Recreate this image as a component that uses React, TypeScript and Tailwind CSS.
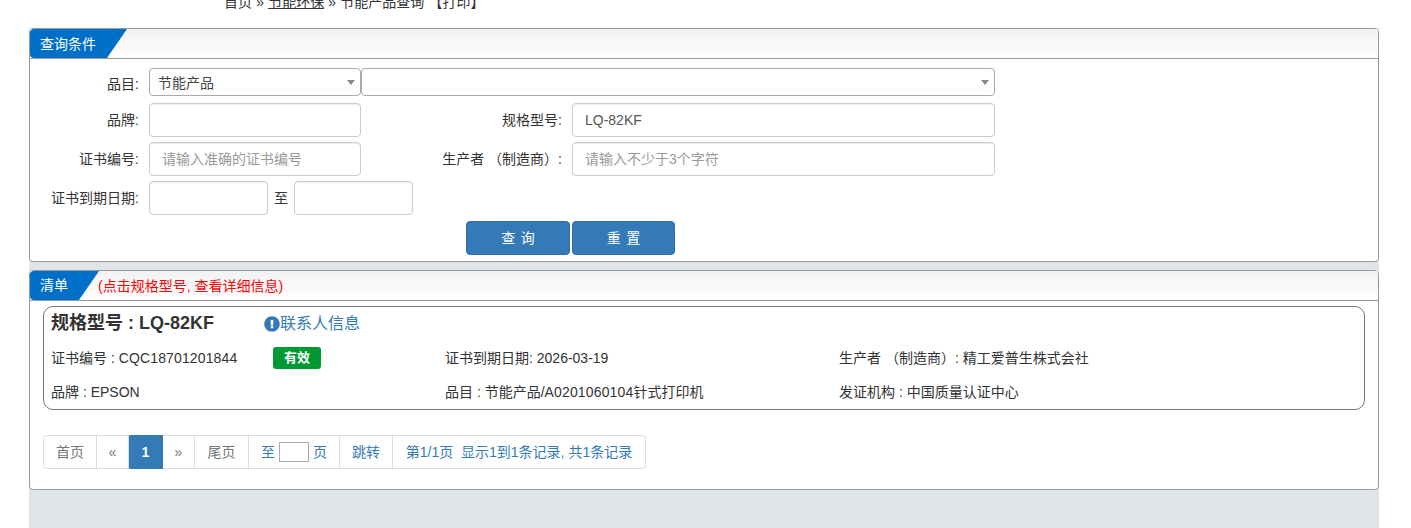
import React from "react";
import { FaExclamationCircle } from "react-icons/fa";

function Label({ children, w = "w-[109px]", cls = "" }: { children: React.ReactNode; w?: string; cls?: string }) {
  return <label className={`${w} shrink-0 text-right text-[14px] text-[#333] ${cls}`}>{children}</label>;
}

function Input({ w, placeholder, value }: { w: string; placeholder?: string; value?: string }) {
  return (
    <input
      readOnly
      placeholder={placeholder}
      value={value ?? ""}
      className={`${w} h-[34px] rounded-[4px] border border-[#ccc] bg-white px-3 text-[14px] text-[#555] outline-none placeholder:text-[#999] shadow-[inset_0_1px_1px_rgba(0,0,0,0.075)]`}
    />
  );
}

function Select({ w, value }: { w: string; value?: string }) {
  return (
    <div className={`${w} relative h-[28px] rounded-[4px] border border-[#aaa] bg-white pl-2 text-[14px] leading-[28px] text-[#444]`}>
      {value}
      <span className="absolute right-[5px] top-[11px] h-0 w-0 border-x-[4px] border-t-[5px] border-x-transparent border-t-[#888]" />
    </div>
  );
}

function PanelHead({ title, w, leading, extra }: { title: string; w: string; leading: string; extra?: React.ReactNode }) {
  return (
    <div className="flex h-[30px] items-stretch border-b border-[#999] bg-gradient-to-b from-[#f2f2f2] to-white">
      <div
        className={`${w} ${leading} rounded-tl-[4px] rounded-bl-[4px] bg-[#006fc8] pl-[10px] text-[14px] text-white [clip-path:polygon(0_0,100%_0,calc(100%-20px)_100%,0_100%)]`}
      >
        {title}
      </div>
      {extra}
    </div>
  );
}

function Pg({ children, cls = "border-l-0 border-[#ddd] bg-white text-[#777]", w = "" }: { children: React.ReactNode; cls?: string; w?: string }) {
  return (
    <div className={`flex h-[34px] items-center justify-center border text-[14px] ${w} ${cls}`}>
      {children}
    </div>
  );
}

const link = "border-l-0 border-[#ddd] bg-white text-[#337ab7]";

export default function App() {
  return (
    <div className="h-[528px] w-[1411px] overflow-hidden bg-white font-['Liberation_Sans','Noto_Sans_CJK_SC',sans-serif] text-[14px] text-[#333]">
      <div className="h-[28px] overflow-hidden pl-[224px]">
        <div className="-mt-[8px] text-[14px] leading-[20px] text-[#333] [word-spacing:0.3px]">
          首页 » <span className="underline">节能环保</span> » 节能产品查询 【打印】
        </div>
      </div>
      <div className="ml-[29px] h-[500px] w-[1350px] bg-[#e1e5e9]">
        <div className="h-[234px] rounded-[4px] border border-[#999] bg-white">
          <PanelHead title="查询条件" w="w-[97px]" leading="leading-[30px]" />
          <div className="flex items-center pt-[9px]">
            <Label cls="pt-[5px]">品目:</Label>
            <div className="ml-[10px] flex">
              <Select w="w-[212px]" value="节能产品" />
              <Select w="w-[634px]" />
            </div>
          </div>
          <div className="mt-[7px] flex items-center">
            <Label>品牌:</Label>
            <div className="ml-[10px]"><Input w="w-[212px]" /></div>
            <Label w="w-[201px]">规格型号:</Label>
            <div className="ml-[10px]"><Input w="w-[423px]" value="LQ-82KF" /></div>
          </div>
          <div className="mt-[5px] flex items-center">
            <Label>证书编号:</Label>
            <div className="ml-[10px]"><Input w="w-[212px]" placeholder="请输入准确的证书编号" /></div>
            <Label w="w-[201px]">生产者 （制造商）:</Label>
            <div className="ml-[10px]"><Input w="w-[423px]" placeholder="请输入不少于3个字符" /></div>
          </div>
          <div className="mt-[5px] flex items-center">
            <Label>证书到期日期:</Label>
            <div className="ml-[10px]"><Input w="w-[119px]" /></div>
            <span className="mx-[6px] w-[14px] text-[14px]">至</span>
            <Input w="w-[119px]" />
          </div>
          <div className="mt-[6px] flex pl-[436px]">
            <button className="h-[34px] w-[104px] rounded-[4px] border border-[#2e6da4] bg-[#337ab7] text-[14px] text-white [word-spacing:1.5px]">查 询</button>
            <button className="ml-[2px] h-[34px] w-[103px] rounded-[4px] border border-[#2e6da4] bg-[#337ab7] text-[14px] text-white [word-spacing:1.5px]">重 置</button>
          </div>
        </div>

        <div className="mt-[8px] h-[220px] rounded-[4px] border border-[#999] bg-white">
          <PanelHead
            title="清单"
            w="w-[69px]"
            leading="leading-[28px]"
            extra={<span className="ml-[-1px] text-[14px] leading-[30px] text-[#f00]">(点击规格型号, 查看详细信息)</span>}
          />
          <div className="mx-[13px] mt-[5px] h-[104px] rounded-[10px] border border-[#777] px-[7px]">
            <div className="flex h-[33px] items-center">
              <span className="w-[213px] text-[18px] font-bold text-[#333]">规格型号 : LQ-82KF</span>
              <span className="flex items-center text-[16px] text-[#337ab7]">
                <FaExclamationCircle size={16} />
                联系人信息
              </span>
            </div>
            <div className="mt-[1px] flex h-[34px] items-center">
              <div className="flex w-[394px] items-center">
                <span className="w-[222px]">证书编号 : <span className="tracking-[0.14px]">CQC18701201844</span></span>
                <span className="h-[22px] w-[48px] rounded-[3px] bg-[#009933] text-center text-[13px] font-bold leading-[22px] text-white">有效</span>
              </div>
              <div className="w-[394px]">证书到期日期: 2026-03-19</div>
              <div>生产者 （制造商）: 精工爱普生株式会社</div>
            </div>
            <div className="flex h-[34px] items-center">
              <div className="w-[394px]">品牌 : EPSON</div>
              <div className="w-[394px]">品目 : 节能产品/<span className="tracking-[0.15px]">A0201060104</span>针式打印机</div>
              <div>发证机构 : 中国质量认证中心</div>
            </div>
          </div>
          <div className="ml-[13px] mt-[25px] flex">
            <Pg w="w-[54px]" cls="rounded-l-[4px] border-[#ddd] bg-white text-[#777]">首页</Pg>
            <Pg w="w-[32px]">«</Pg>
            <Pg w="w-[34px]" cls="border-l-0 border-[#337ab7] bg-[#337ab7] font-bold text-white">1</Pg>
            <Pg w="w-[32px]">»</Pg>
            <Pg w="w-[54px]">尾页</Pg>
            <Pg w="w-[91px]" cls={link}>
              至<span className="mx-[4px] h-[20px] w-[30px] border border-[#aaa]" />页
            </Pg>
            <Pg w="w-[53px]" cls={link}>跳转</Pg>
            <Pg w="w-[253px]" cls={`rounded-r-[4px] ${link}`}>第1/1页&nbsp;&nbsp;显示1到1条记录, 共1条记录</Pg>
          </div>
        </div>
      </div>
    </div>
  );
}
